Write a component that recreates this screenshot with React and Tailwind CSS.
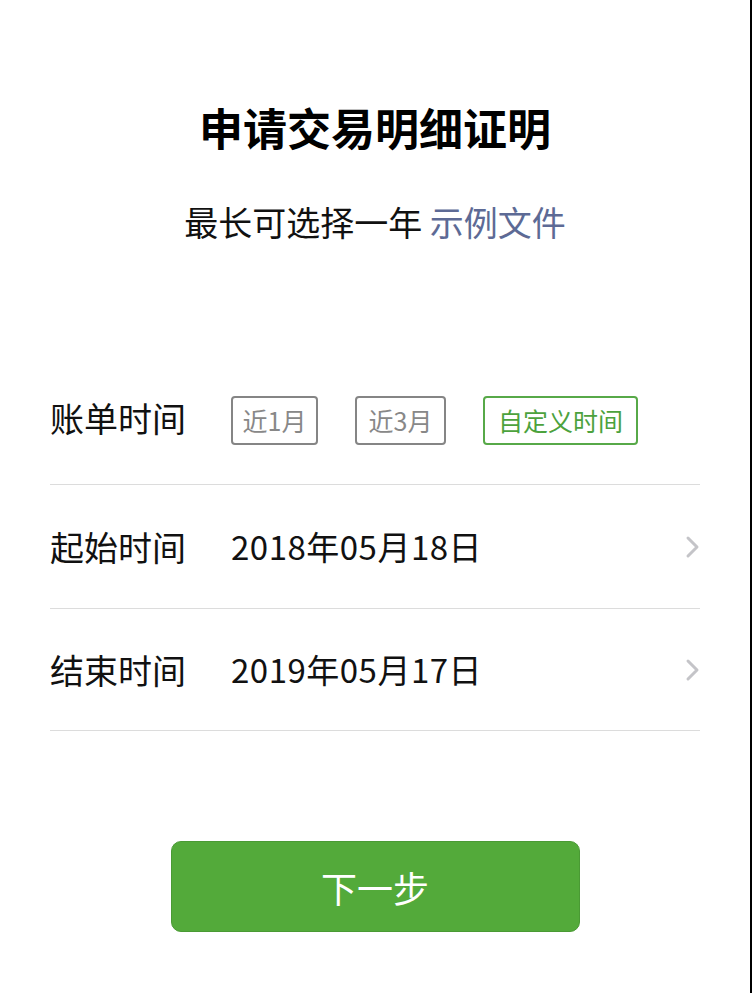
import React from 'react';

const FONT = { fontFamily: '"Noto Sans CJK SC", "Noto Sans", sans-serif' };

function Chevron() {
  return (
    <svg width="16" height="24" viewBox="0 0 16 24" fill="none">
      <path d="M4 3 L13 12 L4 21" stroke="#c4c4c8" strokeWidth="3" strokeLinecap="round" strokeLinejoin="round" />
    </svg>
  );
}

function DateRow({ label, value, h }) {
  return (
    <div className={`flex items-center ${h} border-b border-[#dcdcdc]`}>
      <div className="w-[181px] text-[34px] text-[#111]">{label}</div>
      <div className="flex-1 text-[33px] tracking-[0.5px] text-[#111]">{value}</div>
      <div className="flex items-center"><Chevron /></div>
    </div>
  );
}

export default function App() {
  const quick = [
    { label: '近1月', w: 'w-[87px]', active: false },
    { label: '近3月', w: 'w-[91px]', active: false },
    { label: '自定义时间', w: 'w-[155px]', active: true },
  ];

  return (
    <div className="min-h-[993px] bg-white border-r-2 border-black" style={FONT}>
      <h1 className="pt-[102px] text-[44px] leading-[50px] font-bold text-center text-black">申请交易明细证明</h1>
      <p className="mt-[48px] text-[34px] leading-[44px] text-center text-[#111]">
        最长可选择一年 <span className="text-[#5d6a95]">示例文件</span>
      </p>

      <div className="mt-[107px] px-[50px]">
        {/* 账单时间 */}
        <div className="flex items-center h-[134px] border-b border-[#dcdcdc]">
          <div className="w-[181px] text-[34px] text-[#111]">账单时间</div>
          <div className="flex items-center gap-[37px] mt-[6px]">
            {quick.map(q => (
              <div
                key={q.label}
                className={`${q.w} h-[49px] flex items-center justify-center rounded-[4px] border-2 text-[25px] ${q.active ? 'border-[#57a948] text-[#4ca23d]' : 'border-[#858585] text-[#888]'}`}
              >
                {q.label}
              </div>
            ))}
          </div>
        </div>

        <DateRow label="起始时间" value="2018年05月18日" h="h-[124px]" />
        <DateRow label="结束时间" value="2019年05月17日" h="h-[122px]" />
      </div>

      <div className="flex justify-center mt-[110px]">
        <button className="w-[409px] h-[91px] rounded-[10px] bg-[#53aa3a] border border-[#4a9a34] text-white text-[36px]">
          下一步
        </button>
      </div>
    </div>
  );
}
